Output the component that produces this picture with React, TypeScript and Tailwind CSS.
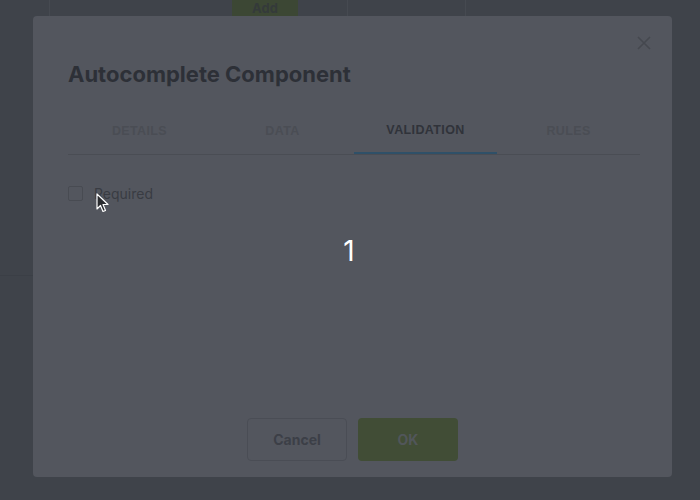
import React from "react";

const tabs = ["Details", "Data", "Validation", "Rules"];

export default function App() {
  const active = "Validation";

  return (
    <div
      className="relative w-[700px] h-[500px] overflow-hidden bg-[#3f434a]"
      style={{ fontFamily: "Inter, 'Liberation Sans', sans-serif" }}
    >
      {/* Underlying page, dimmed */}
      <div className="flex flex-col h-full">
        <div className="flex h-[20px]">
          <div className="w-[50px] border-r border-[#464a51]" />
          <div className="w-[298px] border-r border-[#464a51] pl-[182px]">
            <div className="h-[16px] w-[66px] bg-[#3c4734] flex items-end justify-center text-[13px] font-bold text-[#343a3a] leading-none pb-[1px]">
              Add
            </div>
          </div>
          <div className="w-[118px] border-r border-[#464a51]" />
          <div className="flex-1" />
        </div>
        <div className="h-[255px]" />
        <div className="w-[33px] border-t border-[#3b3f46]" />
      </div>

      {/* Modal */}
      <div className="absolute left-[33px] top-[16px] w-[639px] h-[461px] rounded-[4px] bg-[#53565e] flex flex-col px-[35px]">
        <button className="absolute right-[21px] top-[20px] text-[#45484f]">
          <svg width="14" height="14" viewBox="0 0 14 14" fill="none" stroke="currentColor" strokeWidth="1.6">
            <path d="M1 1 L13 13 M13 1 L1 13" />
          </svg>
        </button>

        <h2 className="mt-[44px] text-[22px] font-bold text-[#2d3037] leading-[28px]">
          Autocomplete Component
        </h2>

        <div className="mt-[18px] grid grid-cols-4 border-b border-[#4a4d54] mr-[-3px]">
          {tabs.map((t) => (
            <div
              key={t}
              className={`h-[48px] pt-[2px] flex items-center justify-center text-[12.5px] font-bold uppercase tracking-[0.03em] ${
                t === active
                  ? "text-[#30333a] border-b-2 border-[#2f5068] mb-[-1px]"
                  : "text-[#4a4d54]"
              }`}
              style={{ fontFamily: "'Liberation Sans', Arial, sans-serif" }}
            >
              {t}
            </div>
          ))}
        </div>

        <label className="mt-[28px] flex items-center gap-[11px]">
          <span className="w-[15px] h-[15px] rounded-[2px] border border-[#484b52]" />
          <span className="text-[14px] text-[#393c43]">Required</span>
        </label>

        <div className="flex-1" />

        <div className="flex justify-center gap-[11px] mb-[16px]">
          <button className="w-[100px] h-[43px] rounded-[4px] border border-[#4a4d55] text-[14px] font-bold text-[#3c3f47]">
            Cancel
          </button>
          <button className="w-[100px] h-[43px] rounded-[4px] bg-[#414d36] text-[14px] font-bold text-[#51565a]">
            OK
          </button>
        </div>
      </div>

      {/* Step marker */}
      <div className="absolute left-[339px] top-[234px] w-[20px] text-center text-[28px] leading-[34px] text-white">
        1
      </div>

      {/* Cursor */}
      <svg
        className="absolute left-[96px] top-[193px]"
        width="14"
        height="20"
        viewBox="0 0 14 20"
      >
        <path
          d="M1 1 L1 16 L4.5 12.5 L7 18.5 L9.5 17.5 L7 11.5 L12 11.5 Z"
          fill="#2a2c30"
          stroke="#ffffff"
          strokeWidth="1.2"
          strokeLinejoin="round"
        />
      </svg>
    </div>
  );
}
